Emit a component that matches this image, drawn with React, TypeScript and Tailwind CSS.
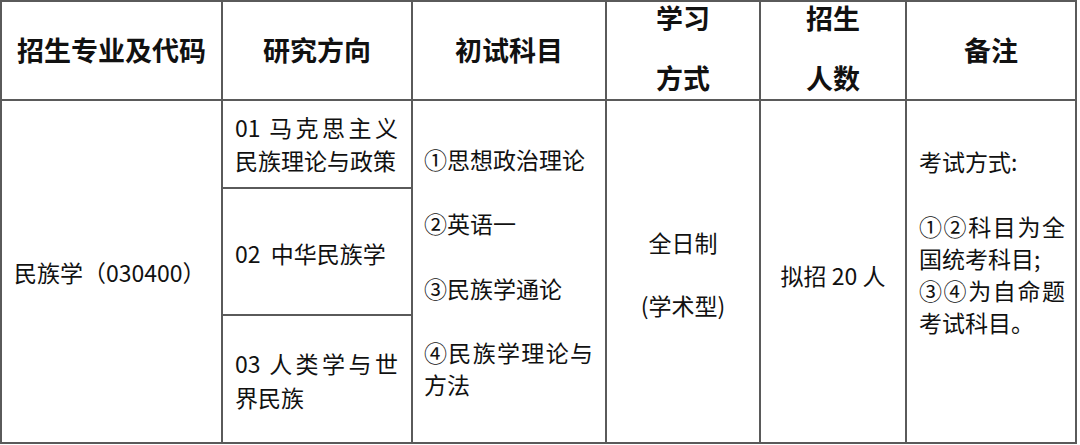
export default function App() {
  const cell = "bg-white text-[#111] text-[23px] leading-[32px]";
  const head = "bg-white flex items-center justify-center text-[27px] font-bold text-[#111]";

  return (
    <div lang="zh-CN" className="w-[1080px] h-[445px] bg-white font-['Noto_Sans_CJK_SC','Noto_Sans',sans-serif]">
      <div className="w-[1077px] grid grid-cols-[219px_188px_192px_152px_144px_168px] grid-rows-[97px_86px_125px_126px] gap-[2px] bg-[#5a5a5a] p-[2px]">
        {/* header */}
        <div className={head}>招生专业及代码</div>
        <div className={head}>研究方向</div>
        <div className={head}>初试科目</div>
        <div className={`${head} flex-col gap-[26px] leading-[34px] pb-[5px]`}>
          <span>学习</span>
          <span>方式</span>
        </div>
        <div className={`${head} flex-col gap-[26px] leading-[34px] pb-[5px]`}>
          <span>招生</span>
          <span>人数</span>
        </div>
        <div className={head}>备注</div>

        {/* body */}
        <div className={`${cell} row-span-3 col-start-1 row-start-2 flex items-center pl-[12px]`}>
          民族学（030400）
        </div>

        <div className={`${cell} col-start-2 row-start-2 flex items-center pl-[12px] pr-[13px] leading-[33px]`}>
          <p className="text-justify w-full">01 马克思主义民族理论与政策</p>
        </div>
        <div className={`${cell} col-start-2 row-start-3 flex items-center pl-[12px] pr-[13px] pt-[2px]`}>
          <p className="whitespace-pre">02  中华民族学</p>
        </div>
        <div className={`${cell} col-start-2 row-start-4 flex items-center pl-[12px] pr-[13px] leading-[34px] pt-[2px]`}>
          <p className="text-justify w-full">03 人类学与世界民族</p>
        </div>

        <div className={`${cell} row-span-3 col-start-3 row-start-2 flex flex-col justify-center pl-[11px] pr-[12px] leading-[32.5px]`}>
          <p className="mb-[32.5px]">①思想政治理论</p>
          <p className="mb-[32.5px]">②英语一</p>
          <p className="mb-[32.5px]">③民族学通论</p>
          <p className="text-justify">④民族学理论与方法</p>
        </div>

        <div className={`${cell} row-span-3 col-start-4 row-start-2 flex flex-col items-center justify-center pt-[4px]`}>
          <p className="mb-[31px]">全日制</p>
          <p>(学术型)</p>
        </div>

        <div className={`${cell} row-span-3 col-start-5 row-start-2 flex items-center justify-center pt-[6px]`}>
          拟招 20 人
        </div>

        <div className={`${cell} row-span-3 col-start-6 row-start-2 pl-[12px] pr-[10px] pt-[44px] leading-[32.5px]`}>
          <p className="mb-[32.5px]">考试方式:</p>
          <p className="text-justify">①②科目为全国统考科目;</p>
          <p className="text-justify">③④为自命题考试科目。</p>
        </div>
      </div>
    </div>
  );
}
